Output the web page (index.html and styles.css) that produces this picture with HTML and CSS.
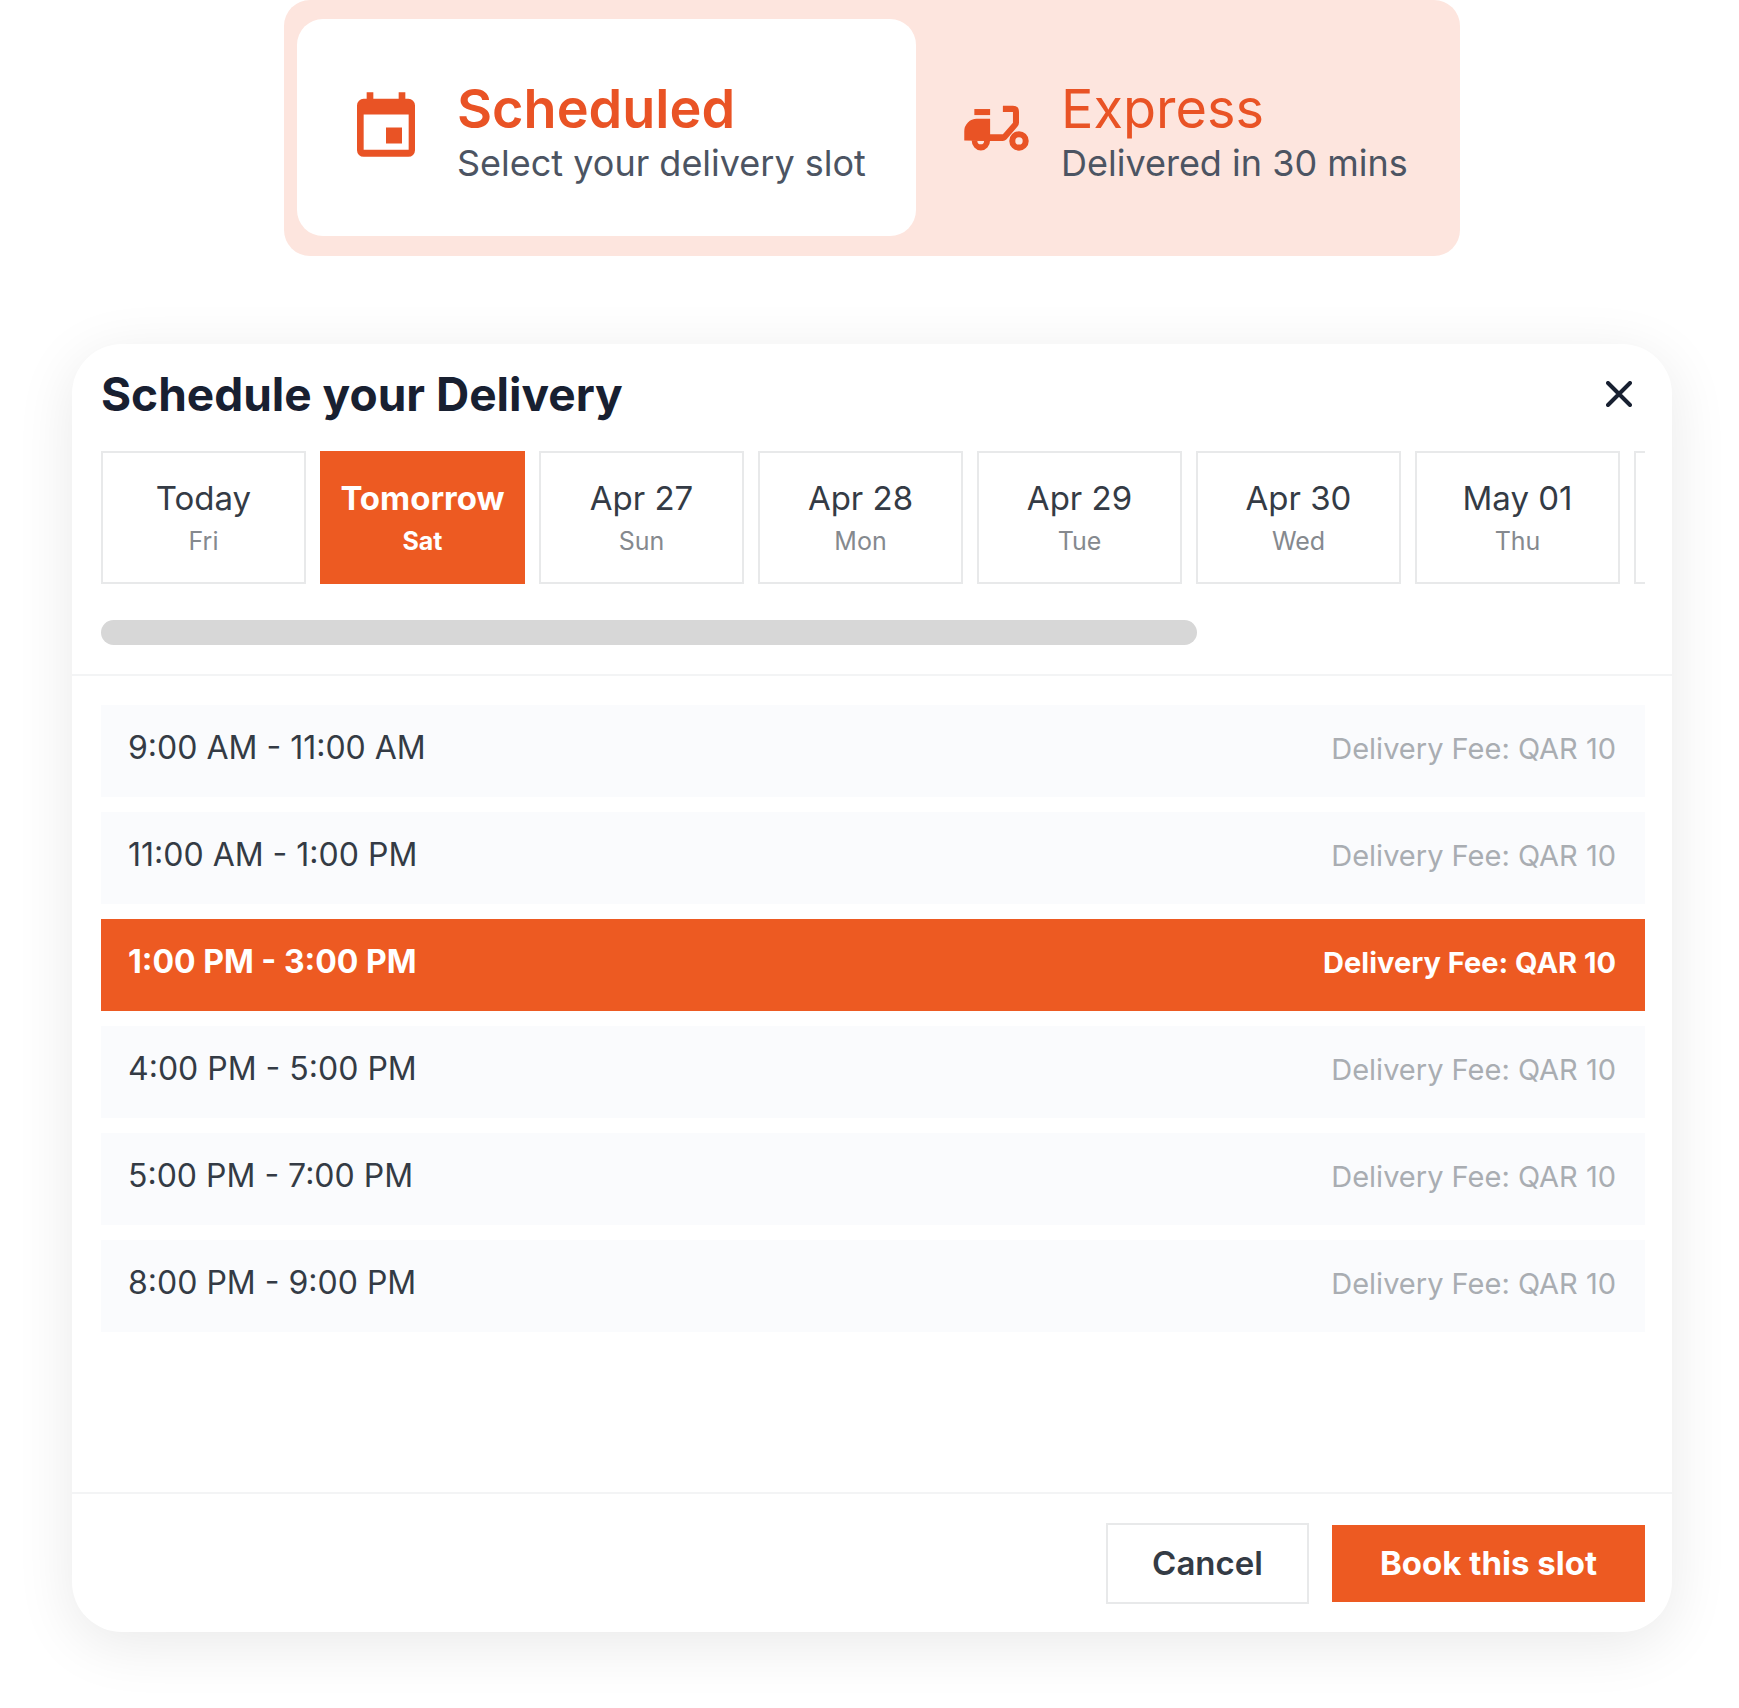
FILE: index.html
```html
<!DOCTYPE html>
<html lang="en">
<head>
    <meta charset="UTF-8">
    <meta name="viewport" content="width=device-width, initial-scale=1.0">
    <title>Schedule your Delivery</title>
    <link rel="stylesheet" href="styles.css">
</head>
<body>
    <div class="mode-switch">
        <button type="button" class="mode active" aria-pressed="true">
            <svg class="calendar-icon" viewBox="52 37 174 194" aria-hidden="true">
                <path fill="currentColor" fill-rule="evenodd" d="M81 37h20v20h76V37h20v20h9a20 20 0 0 1 20 20v134a20 20 0 0 1-20 20H72a20 20 0 0 1-20-20V77a20 20 0 0 1 20-20h9zM72 104v106h135V104z"/>
                <path fill="currentColor" d="M139 143h48v48h-48z"/>
            </svg>
            <span class="mode-text">
                <span class="mode-title">Scheduled</span>
                <span class="mode-note">Select your delivery slot</span>
            </span>
        </button>
        <button type="button" class="mode" aria-pressed="false">
            <svg class="scooter-icon" viewBox="45 45 192 137" aria-hidden="true">
                <path fill="currentColor" d="M75 57h47v18H75z"/>
                <path fill="currentColor" d="M45 151v-28a37 37 0 0 1 37-37h40v46h38l30-34V66h-30V47h30q18 0 18 19v32q0 6-5 12l-32 37q-5 5-11 5h-38z"/>
                <path fill="currentColor" fill-rule="evenodd" d="M67 150h55a27 30 0 0 1-55 0zM84 152a10 10 0 0 0 20 0z"/>
                <circle cx="208" cy="152" r="20" fill="none" stroke="currentColor" stroke-width="18"/>
            </svg>
            <span class="mode-text">
                <span class="mode-title">Express</span>
                <span class="mode-note">Delivered in 30 mins</span>
            </span>
        </button>
    </div>

    <div class="dialog" role="dialog" aria-labelledby="dialog-title">
        <div class="dialog-header">
            <h1 id="dialog-title">Schedule your Delivery</h1>
            <button type="button" class="close" aria-label="Close">
                <svg viewBox="0 0 26 26" aria-hidden="true">
                    <path d="M2 2l22 22M24 2L2 24" fill="none" stroke="currentColor" stroke-width="4" stroke-linecap="round"/>
                </svg>
            </button>
        </div>

        <div class="date-picker">
            <div class="dates">
                <button type="button" class="date">Today <small>Fri</small></button>
                <button type="button" class="date selected">Tomorrow <small>Sat</small></button>
                <button type="button" class="date">Apr 27 <small>Sun</small></button>
                <button type="button" class="date">Apr 28 <small>Mon</small></button>
                <button type="button" class="date">Apr 29 <small>Tue</small></button>
                <button type="button" class="date">Apr 30 <small>Wed</small></button>
                <button type="button" class="date">May 01 <small>Thu</small></button>
                <button type="button" class="date" aria-label="Next date"></button>
            </div>
            <div class="scroll-thumb"></div>
        </div>

        <div class="slots">
            <button type="button" class="slot">9:00 AM - 11:00 AM <span class="fee">Delivery Fee: QAR 10</span></button>
            <button type="button" class="slot">11:00 AM - 1:00 PM <span class="fee">Delivery Fee: QAR 10</span></button>
            <button type="button" class="slot selected">1:00 PM - 3:00 PM <span class="fee">Delivery Fee: QAR 10</span></button>
            <button type="button" class="slot">4:00 PM - 5:00 PM <span class="fee">Delivery Fee: QAR 10</span></button>
            <button type="button" class="slot">5:00 PM - 7:00 PM <span class="fee">Delivery Fee: QAR 10</span></button>
            <button type="button" class="slot">8:00 PM - 9:00 PM <span class="fee">Delivery Fee: QAR 10</span></button>
        </div>

        <div class="dialog-footer">
            <button type="button" class="btn cancel">Cancel</button>
            <button type="button" class="btn book">Book this slot</button>
        </div>
    </div>
</body>
</html>
```
FILE: styles.css
```css
* {
    box-sizing: border-box;
}

body {
    margin: 0;
    padding: 0 67px 76px 72px;
    background: #fff;
    color: #343b45;
    font-family: Inter, sans-serif;
}

button {
    margin: 0;
    padding: 0;
    border: none;
    background: none;
    color: inherit;
    font: inherit;
    cursor: pointer;
}

/* Scheduled / Express switch */
.mode-switch {
    display: grid;
    grid-template-columns: 619fr 531fr;
    max-width: 1176px;
    margin: 0 auto 88px;
    padding: 19px 13px 20px;
    background: #fde5de;
    border-radius: 26px;
}

.mode {
    display: flex;
    align-items: flex-start;
    padding: 60px 0 49px 48px;
    border-radius: 26px;
    color: #e95325;
    text-align: left;
}

.mode.active {
    padding-left: 60px;
    background: #fff;
}

.calendar-icon {
    width: 58px;
    height: 65px;
    margin: 13px 42px 0 0;
}

.scooter-icon {
    width: 65px;
    height: 46px;
    margin: 26px 32px 0 0;
}

.mode-text {
    display: flex;
    flex-direction: column;
    white-space: nowrap;
}

.mode-title {
    font-size: 54px;
    line-height: 60px;
}

.mode.active .mode-title {
    font-weight: 600;
}

.mode-note {
    color: #4c5462;
    font-size: 36px;
    line-height: 48px;
}

/* Dialog */
.dialog {
    background: #fff;
    border-radius: 50px;
    box-shadow: 0 12px 60px rgba(0, 0, 0, 0.09);
}

.dialog-header {
    display: flex;
    justify-content: space-between;
    align-items: center;
    padding: 16px 40px 23px 29px;
}

h1 {
    margin: 0;
    color: #182031;
    font-size: 46px;
    font-weight: 700;
    line-height: 68px;
}

.close {
    display: flex;
    color: #182031;
}

.close svg {
    width: 26px;
    height: 26px;
}

.date-picker {
    padding: 0 27px 29px 29px;
    border-bottom: 2px solid #f3f4f5;
}

.dates {
    display: flex;
    gap: 14px;
    overflow: hidden;
}

.date {
    display: flex;
    flex: 0 0 205px;
    flex-direction: column;
    align-items: center;
    justify-content: center;
    height: 133px;
    padding-top: 2px;
    border: 2px solid #e8e9ea;
    font-size: 33px;
    line-height: 44px;
}

.date small {
    color: #85898e;
    font-size: 25px;
    line-height: 42px;
}

.date.selected,
.slot.selected {
    border-color: #ed5a22;
    background: #ed5a22;
    color: #fff;
    font-weight: 700;
}

.selected small,
.selected .fee {
    color: #fff;
}

.scroll-thumb {
    width: 71%;
    height: 25px;
    margin-top: 36px;
    border-radius: 13px;
    background: #d7d7d7;
}

/* Time slots */
.slots {
    display: flex;
    flex-direction: column;
    gap: 15px;
    padding: 29px 27px 160px 29px;
}

.slot {
    display: flex;
    justify-content: space-between;
    align-items: baseline;
    padding: 0 29px 6px 27px;
    background: #fafbfd;
    font-size: 32px;
    line-height: 86px;
}

.fee {
    color: #a9adb2;
    font-size: 29px;
    line-height: 80px;
}

.dialog-footer {
    display: flex;
    justify-content: flex-end;
    align-items: center;
    gap: 23px;
    padding: 29px 27px 28px;
    border-top: 2px solid #f3f4f5;
}

.btn {
    height: 77px;
    padding: 0 24px 2px;
    font-size: 33px;
    font-weight: 600;
}

.cancel {
    min-width: 203px;
    height: 81px;
    border: 2px solid #e8e9ea;
}

.book {
    min-width: 313px;
    background: #ed5a22;
    color: #fff;
    font-weight: 700;
}
```
